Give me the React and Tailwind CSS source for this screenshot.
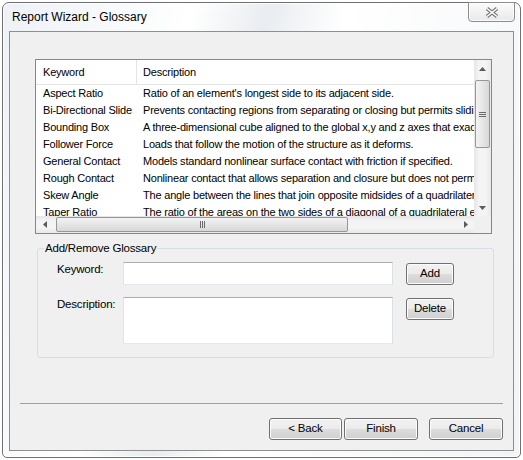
import React from "react";

const rows = [
  ["Aspect Ratio", "Ratio of an element's longest side to its adjacent side."],
  ["Bi-Directional Slide", "Prevents contacting regions from separating or closing but permits sliding."],
  ["Bounding Box", "A three-dimensional cube aligned to the global x,y and z axes that exactly encloses the model."],
  ["Follower Force", "Loads that follow the motion of the structure as it deforms."],
  ["General Contact", "Models standard nonlinear surface contact with friction if specified."],
  ["Rough Contact", "Nonlinear contact that allows separation and closure but does not permit sliding."],
  ["Skew Angle", "The angle between the lines that join opposite midsides of a quadrilateral element."],
  ["Taper Ratio", "The ratio of the areas on the two sides of a diagonal of a quadrilateral element."],
];

const Arrow = ({ dir }) => {
  const pts = {
    up: "0,4 3.5,0 7,4",
    down: "0,0 3.5,4 7,0",
    left: "4,0 0,3.5 4,7",
    right: "0,0 4,3.5 0,7",
  }[dir];
  const vert = dir === "up" || dir === "down";
  return (
    <svg width={vert ? 7 : 4} height={vert ? 4 : 7} viewBox={vert ? "0 0 7 4" : "0 0 4 7"}>
      <polygon points={pts} fill="#5b5b5b" />
    </svg>
  );
};

const WinButton = ({ children, className = "" }) => (
  <button
    className={`h-[22px] rounded-[3px] border border-[#707070] bg-[linear-gradient(#f2f2f2_0%,#ebebeb_50%,#dddddd_51%,#cfcfcf_100%)] shadow-[inset_0_0_0_1px_#fcfcfc] text-[11.5px] text-black leading-none ${className}`}
  >
    {children}
  </button>
);

const TextBox = ({ className = "" }) => (
  <div
    className={`border border-[#abadb3] border-l-[#e2e3ea] border-r-[#dbdfe6] border-b-[#e3e9ef] bg-white ${className}`}
  />
);

export default function App() {
  return (
    <div className="w-[523px] h-[460px] bg-white p-[2px] font-['Liberation_Sans',Arial,sans-serif] text-[11px] tracking-[-0.2px] text-black">
      <div className="relative h-[456px] rounded-t-[7px] rounded-b-[5px] border border-[#6f6f6f] bg-[linear-gradient(105deg,#eef1f5_0%,#ffffff_30%,#e9ecf0_42%,#ffffff_54%,#f2f4f7_100%)] shadow-[inset_0_0_0_1px_rgba(255,255,255,0.9)] flex flex-col px-[6px] pb-[6px]">
        {/* title bar */}
        <div className="h-[28px] flex items-center pl-[3px] text-[12px] tracking-normal text-black">
          Report Wizard - Glossary
        </div>
        <div className="absolute top-[-1px] right-[5px] w-[47px] h-[20px] rounded-b-[4px] border border-[#8c8c8c] bg-[linear-gradient(#fbfbfb,#e9e9e9)] shadow-[inset_0_0_0_1px_rgba(255,255,255,0.8)] flex items-center justify-center">
          <svg width="14" height="11" viewBox="0 0 14 11">
            <path d="M2 1.5 L12 9.5 M12 1.5 L2 9.5" stroke="#777" strokeWidth="3.6" />
            <path d="M2 1.5 L12 9.5 M12 1.5 L2 9.5" stroke="#fff" strokeWidth="1.6" />
          </svg>
        </div>

        {/* client area */}
        <div className="flex-1 border border-[#8e8f8f] bg-[#f0f0f0] flex flex-col">
          {/* list view */}
          <div className="ml-[25px] mt-[27px] w-[457px] h-[175px] border border-[#828790] bg-white grid grid-cols-[1fr_17px] grid-rows-[1fr_17px]">
            <div className="overflow-hidden">
              <div className="flex h-[25px] border-b border-[#e5e5e5] items-center whitespace-nowrap">
                <div className="w-[100px] shrink-0 pl-[7px]">Keyword</div>
                <div className="h-full border-l border-[#e5e5e5] pl-[6px] flex items-center">Description</div>
              </div>
              {rows.map(([k, d]) => (
                <div key={k} className="flex h-[17px] items-center whitespace-nowrap">
                  <div className="w-[100px] shrink-0 pl-[7px]">{k}</div>
                  <div className="pl-[7px]">{d}</div>
                </div>
              ))}
            </div>

            {/* vertical scrollbar */}
            <div className="bg-[linear-gradient(90deg,#e6e6e6,#f4f4f4_30%,#f4f4f4_70%,#e8e8e8)] flex flex-col">
              <div className="h-[17px] flex items-center justify-center">
                <Arrow dir="up" />
              </div>
              <div className="mt-[3px] mx-[1px] h-[68px] rounded-[2px] border border-[#979797] bg-[linear-gradient(90deg,#f3f3f3,#e6e6e6_50%,#d7d7d7)] flex flex-col items-center justify-center gap-[1px]">
                <div className="w-[7px] h-px bg-[#6a6a6a]" />
                <div className="w-[7px] h-px bg-[#6a6a6a]" />
                <div className="w-[7px] h-px bg-[#6a6a6a]" />
              </div>
              <div className="flex-1" />
              <div className="h-[17px] flex items-center justify-center">
                <Arrow dir="down" />
              </div>
            </div>

            {/* horizontal scrollbar */}
            <div className="bg-[linear-gradient(#e6e6e6,#f4f4f4_30%,#f4f4f4_70%,#e8e8e8)] flex">
              <div className="w-[17px] flex items-center justify-center">
                <Arrow dir="left" />
              </div>
              <div className="ml-[3px] my-[1px] w-[292px] rounded-[2px] border border-[#979797] bg-[linear-gradient(#f3f3f3,#e6e6e6_50%,#d7d7d7)] flex items-center justify-center gap-[1px]">
                <div className="w-px h-[7px] bg-[#6a6a6a]" />
                <div className="w-px h-[7px] bg-[#6a6a6a]" />
                <div className="w-px h-[7px] bg-[#6a6a6a]" />
              </div>
              <div className="flex-1" />
              <div className="w-[17px] flex items-center justify-center">
                <Arrow dir="right" />
              </div>
            </div>
            <div className="bg-[#f0f0f0]" />
          </div>

          {/* group box */}
          <fieldset className="ml-[27px] mt-[7px] w-[457px] h-[117px] rounded-[3px] border border-[#d5dfe5] px-0">
            <legend className="ml-[6px] px-px leading-[14px] text-[11.5px]">Add/Remove Glossary</legend>
            <div className="pl-[19px] pt-[7px] flex flex-col gap-[12px]">
              <div className="flex items-start">
                <div className="w-[66px] mt-px leading-[13px] text-[11.5px]">Keyword:</div>
                <TextBox className="w-[270px] h-[23px]" />
                <WinButton className="ml-[13px] mt-px w-[48px] h-[21px]">Add</WinButton>
              </div>
              <div className="flex items-start">
                <div className="w-[66px] mt-px leading-[13px] text-[11.5px]">Description:</div>
                <TextBox className="w-[270px] h-[47px]" />
                <WinButton className="ml-[13px] mt-px w-[48px] h-[21px]">Delete</WinButton>
              </div>
            </div>
          </fieldset>

          {/* separator */}
          <div className="ml-[10px] mt-[45px] w-[483px] h-px bg-[#a0a0a0]" />

          {/* footer buttons */}
          <div className="mt-[14px] pr-[10px] flex justify-end">
            <WinButton className="w-[73px]">&lt; Back</WinButton>
            <WinButton className="ml-[2px] w-[74px]">Finish</WinButton>
            <WinButton className="ml-[11px] w-[74px]">Cancel</WinButton>
          </div>
        </div>
      </div>
    </div>
  );
}
